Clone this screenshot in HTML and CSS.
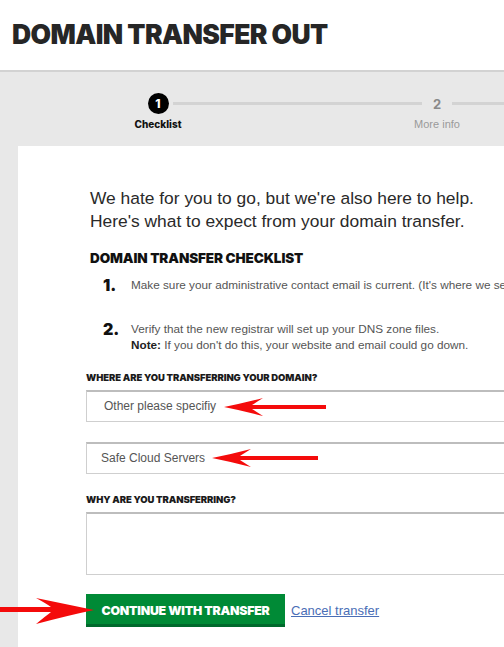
FILE: index.html
```html
<!DOCTYPE html>
<html>
<head>
<meta charset="utf-8">
<link rel="stylesheet" href="styles.css">
</head>
<body>
<div class="page">
  <header class="top">
    <h1 class="title">DOMAIN TRANSFER OUT</h1>
  </header>
  <main class="shell">
    <nav class="stepper">
      <div class="step active">
        <span class="dot">1</span>
        <span class="step-label">Checklist</span>
      </div>
      <div class="connector"></div>
      <div class="step">
        <span class="dot">2</span>
        <span class="step-label">More info</span>
      </div>
      <div class="connector"></div>
    </nav>
    <section class="card">
      <div class="intro">
        <p class="lead">We hate for you to go, but we're also here to help.<br>Here's what to expect from your domain transfer.</p>
        <h2 class="checklist-title">DOMAIN TRANSFER CHECKLIST</h2>
        <ol class="checklist">
          <li class="item item-one"><span class="num">1.</span><span class="item-text">Make sure your administrative contact email is current. (It's where we send the transfer authorization code.)</span></li>
          <li class="item"><span class="num">2.</span><span class="item-text">Verify that the new registrar will set up your DNS zone files.<br><b>Note:</b> If you don't do this, your website and email could go down.</span></li>
        </ol>
      </div>
      <form class="form">
        <label class="field-label">WHERE ARE YOU TRANSFERRING YOUR DOMAIN?</label>
        <div class="field field-select">Other please specifiy</div>
        <div class="field field-text">Safe Cloud Servers</div>
        <label class="field-label label-why">WHY ARE YOU TRANSFERRING?</label>
        <div class="field field-area"></div>
        <div class="actions">
          <button type="button" class="btn-continue">CONTINUE WITH TRANSFER</button>
          <a class="cancel" href="#">Cancel transfer</a>
        </div>
      </form>
    </section>
  </main>

  <svg class="arrow arrow-one" width="102" height="20" viewBox="0 0 102 20">
    <path d="M0 9 Q20 5 39 0 Q31 5 28 7 L102 7 L102 11 L28 11 Q31 13 39 18 Q20 13 0 9 Z" fill="#f40b0b"/>
  </svg>
  <svg class="arrow arrow-two" width="106" height="20" viewBox="0 0 106 20">
    <path d="M0 9 Q20 5 39 0 Q31 5 28 7 L106 7 L106 11 L28 11 Q31 13 39 18 Q20 13 0 9 Z" fill="#f40b0b"/>
  </svg>
  <svg class="arrow arrow-three" width="94" height="26" viewBox="0 0 94 26">
    <path d="M94 12 Q70 17 36 26 Q47 17 51 14 L0 14 L0 9 L51 9 Q47 6 36 0 Q70 7 94 12 Z" fill="#f40b0b"/>
  </svg>
</div>
</body>
</html>
```

FILE: styles.css
```css
html, body {
  margin: 0;
  padding: 0;
  overflow: hidden;
  background: #e8e8e8;
}

.page {
  position: relative;
  width: 504px;
  height: 647px;
  overflow: hidden;
  font-family: "Liberation Sans", Arial, sans-serif;
}

.top {
  background: #ffffff;
  height: 70px;
  border-bottom: 2px solid #d2d2d2;
  box-sizing: content-box;
}

.title {
  margin: 0;
  padding: 17px 0 0 12px;
  font-family: Inter, "DejaVu Sans", sans-serif;
  font-weight: 900;
  font-size: 26.5px;
  line-height: 34px;
  letter-spacing: -0.6px;
  color: #262626;
  white-space: nowrap;
}

.shell {
  background: #e8e8e8;
}

.stepper {
  display: flex;
  align-items: flex-start;
  padding: 21px 0 0 143px;
  height: 53px;
}

.step {
  width: 30px;
  display: flex;
  flex-direction: column;
  align-items: center;
  flex: none;
}

.dot {
  width: 21px;
  height: 21px;
  border-radius: 50%;
  display: flex;
  align-items: center;
  justify-content: center;
  font-family: Inter, "DejaVu Sans", sans-serif;
  font-weight: 700;
  font-size: 13px;
  color: #8a8a8a;
}

.step.active .dot {
  background: #000;
  color: #fff;
  font-size: 12px;
  font-weight: 800;
}

.step-label {
  margin-top: 3px;
  white-space: nowrap;
  font-size: 11px;
  line-height: 14px;
  color: #9a9a9a;
}

.step.active .step-label {
  font-family: Inter, "DejaVu Sans", sans-serif;
  font-weight: 800;
  font-size: 10px;
  color: #111;
}

.connector {
  flex: none;
  width: 249px;
  height: 3px;
  margin-top: 9px;
  background: #d3d3d3;
}

.connector:last-child {
  width: 200px;
}

.card {
  margin-left: 18px;
  width: 700px;
  background: #fff;
  padding-top: 41px;
  padding-bottom: 40px;
}

.intro {
  padding-left: 72px;
}

.lead {
  margin: 0;
  font-size: 17.4px;
  line-height: 23px;
  color: #2a2a2a;
}

.checklist-title {
  margin: 17px 0 0;
  font-family: Inter, "DejaVu Sans", sans-serif;
  font-weight: 900;
  font-size: 13.5px;
  line-height: 16px;
  color: #111;
  letter-spacing: -0.1px;
}

.checklist {
  list-style: none;
  margin: 10px 0 0;
  padding: 0 0 0 13px;
}

.item {
  display: flex;
  align-items: flex-start;
}

.item-one {
  height: 44px;
}

.num {
  width: 28px;
  flex: none;
  font-family: Inter, "DejaVu Sans", sans-serif;
  font-weight: 900;
  font-size: 16px;
  line-height: 18px;
  color: #111;
}

.item-text {
  font-size: 11.75px;
  line-height: 16px;
  color: #555;
  white-space: nowrap;
  padding-top: 1px;
}

.item-text b {
  color: #222;
}

.form {
  padding-left: 68px;
  margin-top: 19px;
  width: 520px;
}

.field-label {
  display: block;
  font-family: Inter, "DejaVu Sans", sans-serif;
  font-weight: 900;
  font-size: 9.5px;
  line-height: 12px;
  color: #1b1b1b;
  letter-spacing: -0.1px;
}

.field {
  box-sizing: border-box;
  border: 1px solid #cfcfcf;
  border-top: 2px solid #bdbdbd;
  background: #fff;
  font-size: 12px;
  color: #555;
}

.field-select {
  margin-top: 6px;
  height: 32px;
  line-height: 29px;
  padding-left: 17px;
}

.field-text {
  margin-top: 20px;
  height: 32px;
  line-height: 29px;
  padding-left: 14px;
}

.label-why {
  margin-top: 20px;
}

.field-area {
  margin-top: 6px;
  height: 63px;
}

.actions {
  display: flex;
  align-items: center;
  margin-top: 19px;
}

.btn-continue {
  width: 199px;
  height: 33px;
  border: none;
  border-bottom: 3px solid #00692c;
  background: #008a36;
  color: #fff;
  font-family: Inter, "DejaVu Sans", sans-serif;
  font-weight: 900;
  font-size: 12.3px;
  padding: 3px 0 0;
  letter-spacing: -0.2px;
}

.cancel {
  margin-left: 6px;
  font-size: 13px;
  color: #4a6eb6;
  text-decoration: underline;
}

.arrow {
  position: absolute;
}

.arrow-one {
  left: 224px;
  top: 398px;
}

.arrow-two {
  left: 212px;
  top: 449px;
}

.arrow-three {
  left: 0;
  top: 598px;
}
```
